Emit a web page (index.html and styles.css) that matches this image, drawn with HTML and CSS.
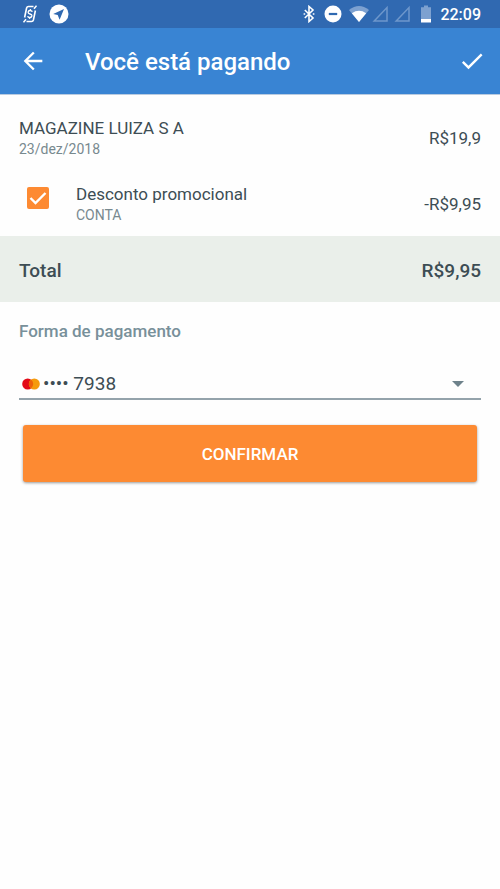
FILE: index.html
```html
<!DOCTYPE html>
<html lang="pt-BR">
<head>
<meta charset="utf-8">
<meta name="viewport" content="width=device-width, initial-scale=1">
<title>Você está pagando</title>
<link rel="stylesheet" href="styles.css">
</head>
<body>
<div class="status">
  <div class="status-group notices">
    <svg width="14" height="18" viewBox="0 0 14 18" fill="none" stroke="#fff" stroke-width="1.600">
      <path d="M10.500 1.500H5.500Q4 1.500 3.600 3L1.600 12.500M3.500 16.500H8.500Q10 16.500 10.400 15L12.400 5.500"/>
      <path d="M13.500.7 11 3.700M.5 17.300 3 14.300"/>
      <path stroke-width="1.400" d="M9.300 6.800Q8.900 5.500 7.200 5.500 5.200 5.500 5.100 7.200 5.100 8.500 7 9 9 9.500 8.900 10.900 8.600 12.500 6.800 12.500 5 12.500 4.700 11.100M7.400 4V5.500M6.600 12.500V14"/>
    </svg>
    <svg width="20" height="20" viewBox="0 0 20 20">
      <circle cx="10" cy="10" r="9.500" fill="#fff"/>
      <path d="M15 5 4.200 9.900 8.700 11 10.600 15.800Z" fill="#3069b1"/>
    </svg>
  </div>
  <div class="status-group">
    <svg width="12" height="18" viewBox="0 0 12 18" fill="none" stroke="#fff" stroke-width="1.600">
      <path d="M1.800 5 10 13 6 16.500V1.500L10 5 1.800 13"/>
      <path d="M.6 9H2.200M9.800 9H11.400"/>
    </svg>
    <svg class="dnd" width="18" height="18" viewBox="0 0 18 18">
      <circle cx="9" cy="9" r="8.500" fill="#fff"/>
      <path d="M4.800 9H13.200" stroke="#3069b1" stroke-width="2.200"/>
    </svg>
    <svg class="wifi" width="20" height="18" viewBox="0 0 20 18">
      <path d="M0 5Q10-3 20 5L10 17Z" fill="#7da1d0"/>
      <path d="M2.800 8.200Q10 3.500 17.200 8.200L10 17Z" fill="#fff"/>
    </svg>
    <svg class="signal" width="17" height="18" viewBox="0 0 17 18" fill="none" stroke="#6e97cb" stroke-width="1.500">
      <path d="M2.200 16H15V2.600Z"/>
    </svg>
    <svg class="signal" width="17" height="18" viewBox="0 0 17 18" fill="none" stroke="#6e97cb" stroke-width="1.500">
      <path d="M2.200 16H15V2.600Z"/>
    </svg>
    <svg class="battery" width="10" height="18" viewBox="0 0 10 18">
      <path d="M3 .5H7V2.300H10V14H0V2.300H3Z" fill="#7da1d0"/>
      <path d="M0 14H10V17.500H0Z" fill="#fff"/>
    </svg>
    <time class="clock">22:09</time>
  </div>
</div>
<header class="toolbar">
  <button class="icon-button" type="button" aria-label="Voltar">
    <svg width="28" height="28" viewBox="0 0 24 24"><path fill="#fff" d="M20 11H7.830l5.590-5.590L12 4l-8 8 8 8 1.410-1.410L7.830 13H20z"/></svg>
  </button>
  <h1 class="title">Você está pagando</h1>
  <button class="icon-button" type="button" aria-label="Concluir">
    <svg width="28" height="28" viewBox="0 0 24 24"><path fill="#fff" d="M9 16.170L4.830 12l-1.420 1.410L9 19 21 7l-1.410-1.410z"/></svg>
  </button>
</header>
<main class="content">
  <section class="row">
    <div class="details">
      <div class="name">MAGAZINE LUIZA S A</div>
      <div class="note">23/dez/2018</div>
    </div>
    <div class="amount">R$19,9</div>
  </section>
  <section class="row">
    <span class="check">
      <input class="check-input" type="checkbox" id="discount" checked>
      <svg class="check-mark" width="22" height="22" viewBox="0 0 22 22"><path d="M3.500 11 8.500 16 18.500 6" fill="none" stroke="#fff" stroke-width="2.400"/></svg>
    </span>
    <label class="details" for="discount">
      <span class="name">Desconto promocional</span>
      <span class="note">CONTA</span>
    </label>
    <div class="amount">-R$9,95</div>
  </section>
  <section class="row total">
    <div>Total</div>
    <div>R$9,95</div>
  </section>
  <form class="payment">
    <label class="payment-label" for="card">Forma de pagamento</label>
    <div class="field">
      <svg width="18" height="12" viewBox="0 0 18 12">
        <circle cx="5.700" cy="6" r="5.500" fill="#e30a17"/>
        <circle cx="12.300" cy="6" r="5.500" fill="#f59b0b"/>
        <path d="M9 1.600A5.500 5.500 0 0 1 9 10.400 5.500 5.500 0 0 1 9 1.600Z" fill="#ed6209"/>
      </svg>
      <select class="select" id="card"><option>•••• 7938</option></select>
      <svg width="12" height="6" viewBox="0 0 12 6"><path d="M0 0H12L6 6Z" fill="#6e828b"/></svg>
    </div>
    <button class="confirm" type="button">CONFIRMAR</button>
  </form>
</main>
</body>
</html>
```
FILE: styles.css
```css
* {
  box-sizing: border-box;
}

body {
  margin: 0;
  background: #fefefe;
  color: #3d4d54;
  font-family: Roboto, "Liberation Sans", sans-serif;
  font-size: 17px;
}

svg {
  display: block;
  flex: none;
}

.status {
  display: flex;
  align-items: center;
  justify-content: space-between;
  height: 28px;
  padding: 0 19px 0 23px;
  background: #3069b1;
  color: #fff;
}

.status-group {
  display: flex;
  align-items: center;
}

.notices {
  gap: 12px;
}

.dnd {
  margin-left: 9px;
}

.wifi {
  margin-left: 7px;
}

.signal {
  margin-left: 3px;
}

.signal + .signal {
  margin-left: 5px;
}

.battery {
  margin-left: 10px;
}

.clock {
  margin-left: 9px;
  padding-top: 2px;
  font-size: 16px;
  font-weight: 500;
  line-height: 26px;
}

.toolbar {
  display: flex;
  align-items: center;
  height: 66px;
  padding: 0 14px 0 19px;
  background: #3984d3;
  color: #fff;
  box-shadow: 0 1px 0 #b9cbe0;
}

.icon-button {
  padding: 0;
  border: 0;
  background: none;
  cursor: pointer;
}

.title {
  flex: 1;
  margin: 0 0 0 38px;
  padding-top: 2px;
  font-size: 24px;
  font-weight: 500;
  line-height: 32px;
}

.content {
  padding-top: 10px;
}

.row {
  display: flex;
  align-items: center;
  justify-content: space-between;
  height: 66px;
  padding: 2px 19px 0;
}

.details {
  flex: 1;
}

.name,
.note {
  display: block;
}

.name {
  line-height: 22px;
}

.note {
  color: #78898f;
  font-size: 14px;
  line-height: 20px;
}

.check {
  position: relative;
  margin: 0 27px 12px 8px;
}

.check-input {
  display: block;
  width: 22px;
  height: 22px;
  margin: 0;
  appearance: none;
  border-radius: 2px;
  background: #fd8a32;
}

.check-mark {
  position: absolute;
  inset: 0;
  pointer-events: none;
}

.total {
  background: #eaefea;
  font-size: 19px;
  font-weight: 500;
}

.payment {
  padding: 17px 19px;
}

.payment-label {
  display: block;
  color: #78909a;
  font-weight: 500;
  line-height: 24px;
}

.field {
  display: flex;
  align-items: center;
  height: 43px;
  margin-top: 14px;
  padding: 12px 17px 0 3px;
  border-bottom: 2px solid #94a3ab;
}

.select {
  flex: 1;
  padding: 0 0 0 3px;
  border: 0;
  appearance: none;
  background: none;
  color: #3d4d54;
  font: 400 19px/24px Roboto, "Liberation Sans", sans-serif;
}

.confirm {
  display: block;
  width: calc(100% - 8px);
  height: 57px;
  margin: 25px 4px 0;
  border: 0;
  border-radius: 3px;
  background: #fd8a32;
  box-shadow: 0 1px 3px #0006;
  color: #fff;
  font: 500 17px/24px Roboto, "Liberation Sans", sans-serif;
}
```
